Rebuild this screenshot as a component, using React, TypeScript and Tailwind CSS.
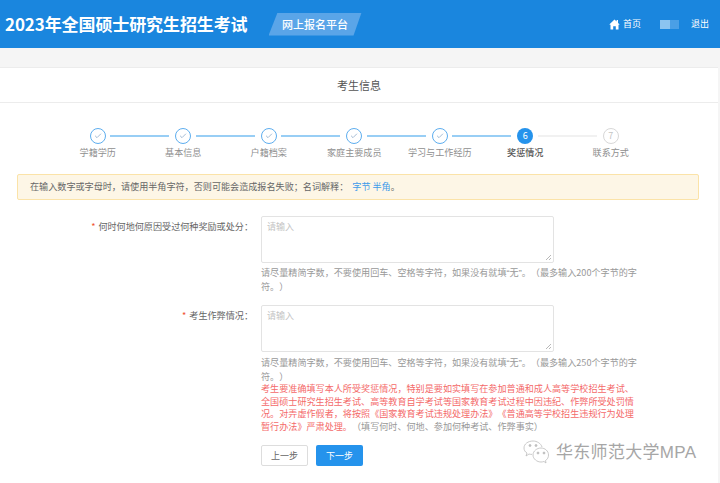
import { Check } from "lucide-react";

const cjk = { fontFamily: '"Noto Sans CJK SC", "Liberation Sans", sans-serif' };

const steps = ["学籍学历", "基本信息", "户籍档案", "家庭主要成员", "学习与工作经历", "奖惩情况", "联系方式"];
const current = 5;

function Step(props: { name: string; index: number }) {
  const { name, index } = props;
  const done = index < current;
  const active = index === current;

  return (
    <div className="relative flex w-[85.5px] flex-col items-center">
      {index < steps.length - 1 && (
        <div
          className={`absolute left-[55px] top-[7px] h-[1.5px] w-[59px] ${done ? "bg-[#98cef5]" : "bg-[#f1f1f1]"}`}
        />
      )}
      {done && (
        <div className="flex h-4 w-4 items-center justify-center rounded-full border border-[#5eaeef] bg-white">
          <Check size={8} className="text-[#7a9cc0]" strokeWidth={2} />
        </div>
      )}
      {active && (
        <div className="flex h-4 w-4 items-center justify-center rounded-full bg-[#2593ec] text-[9px] text-white">
          {index + 1}
        </div>
      )}
      {!done && !active && (
        <div className="flex h-4 w-4 items-center justify-center rounded-full border border-[#d8d8d8] bg-white text-[9px] text-[#c4c4c4]">
          {index + 1}
        </div>
      )}
      <span
        className={`mt-[2px] text-[9.1px] leading-[13px] whitespace-nowrap ${active ? "font-medium text-[#555555]" : "text-[#8f8f8f]"}`}
      >
        {name}
      </span>
    </div>
  );
}

function Field(props: { label: string; pad: string; children: React.ReactNode }) {
  return (
    <div className={`flex ${props.pad}`}>
      <label className="w-[253px] shrink-0 pt-[4px] text-right text-[9.1px] leading-[13px] whitespace-nowrap text-[#666666]">
        <span className="mr-[3px] text-[#f0502e]">*</span>
        {props.label}
      </label>
      <div className="ml-2 w-[380px]">
        <div className="relative h-[47px] w-[293px] rounded-[2px] border border-[#e3e3e3] bg-white px-[5px] py-[3px] text-[9px] leading-[13px] text-[#c4c4c4]">
          请输入
          <svg className="absolute bottom-[1px] right-[1px]" width="7" height="7" viewBox="0 0 7 7">
            <path d="M1 6 6 1M4 6 6 4" stroke="#999999" strokeWidth="0.7" />
          </svg>
        </div>
        {props.children}
      </div>
    </div>
  );
}

function Hint(props: { max: number; top: string }) {
  return (
    <p className={`${props.top} text-[9.1px] leading-[12.5px] text-[#999999]`}>
      请尽量精简字数，不要使用回车、空格等字符，如果没有就填
      <span className="font-['Liberation_Sans']">“</span>无<span className="font-['Liberation_Sans']">”</span>
      。（最多输入{props.max}个字节的字符。）
    </p>
  );
}

export default function App() {
  return (
    <div className="min-h-[483px] overflow-hidden bg-[#f5f5f5] [text-spacing-trim:space-all]" style={cjk}>
      <header className="flex h-12 items-center bg-[#1a86de] pl-[5px] pr-[11px]">
        <h1 className="text-[17px] font-bold tracking-[-0.1px] whitespace-nowrap text-white">
          2023年全国硕士研究生招生考试
        </h1>
        <div className="ml-[21px] flex h-[23px] w-[93px] items-center justify-center bg-[#5aa5e8] text-[11px] font-medium text-white [clip-path:polygon(9px_0,100%_0,calc(100%-8px)_100%,0_100%)]">
          网上报名平台
        </div>
        <div className="ml-auto flex items-center text-[9px] text-white">
          <svg width="11" height="11" viewBox="0 0 11 11" fill="white">
            <path d="M5.500 0.500 0.300 5.500 1.500 5.800V10.500H4.200V7.200H6.800V10.500H9.500V5.800L10.700 5.500 9 3.900V1H7.600V2.600Z" />
          </svg>
          <span className="ml-[3px]">首页</span>
          <div className="ml-[19px] flex h-[9px]">
            <div className="w-[10px] bg-[#8cc4f0]" />
            <div className="w-[9px] bg-[#4a9fe6]" />
          </div>
          <span className="ml-3">退出</span>
        </div>
      </header>

      <main className="mt-[19px] mr-[2px] border-t border-[#ececec] bg-white pb-[17px]">
        <div className="flex h-[35px] items-center justify-center border-b border-[#ececec] text-[11px] text-[#555555]">
          考生信息
        </div>

        <div className="flex pt-[25px] pl-[55px]">
          {steps.map((name, index) => (
            <Step key={name} name={name} index={index} />
          ))}
        </div>

        <div className="mt-[15px] mr-[19px] ml-[17px] flex h-[26px] items-center rounded-[2px] border border-[#fbe3a8] bg-[#fdf6e6] pl-3 text-[9.1px] text-[#666666]">
          在输入数字或字母时，请使用半角字符，否则可能会造成报名失败；名词解释：
          <span className="ml-[4px] text-[#3d9bea]">字节 半角</span>
          <span>。</span>
        </div>

        <Field label="何时何地何原因受过何种奖励或处分：" pad="pt-[16px]">
          <Hint max={200} top="mt-[3px]" />
        </Field>

        <Field label="考生作弊情况：" pad="pt-[13px]">
          <Hint max={250} top="mt-[4px]" />
          <p className="text-[9.1px] leading-[12.6px] text-[#f46a6a]">
            考生要准确填写本人所受奖惩情况，特别是要如实填写在参加普通和成人高等学校招生考试、全国硕士研究生招生考试、高等教育自学考试等国家教育考试过程中因违纪、作弊所受处罚情况。对弄虚作假者，将按照《国家教育考试违规处理办法》《普通高等学校招生违规行为处理暂行办法》严肃处理。
            <span className="text-[#999999]">（填写何时、何地、参加何种考试、作弊事实）</span>
          </p>
          <div className="mt-[13px] flex gap-2">
            <button className="h-[21px] w-[47px] rounded-[2px] border border-[#dddddd] bg-white text-[9px] text-[#666666]">
              上一步
            </button>
            <button className="h-[21px] w-[47px] rounded-[2px] bg-[#2593ec] text-[9px] text-white">
              下一步
            </button>
          </div>
        </Field>
      </main>

      <div
        className="absolute left-[522px] top-[439px] flex items-center text-[#a6a6a6]"
        style={{ fontFamily: '"Liberation Sans", "Noto Sans CJK SC", sans-serif' }}
      >
        <svg width="28" height="26" viewBox="0 0 28 26" fill="none" stroke="#bdbdbd" strokeWidth="0.8">
          <path d="M11 2C6 2 2 5 2 9c0 2 1 4 3 5l-1 3 3-2c1 .3 2 .4 3 .4" />
          <path d="M11 2c4 0 8 2.500 9 6" />
          <path d="M19 9c-4 0-8 3-8 7s4 7 8 7c1 0 2-.2 3-.5l2 1.500-.5-2.500c2-1.200 3-3.200 3-5.500 0-4-3.500-7-7.500-7Z" />
          <circle cx="8" cy="6.500" r="1" fill="#bdbdbd" />
          <circle cx="14" cy="6.500" r="1" fill="#bdbdbd" />
          <circle cx="16" cy="14" r="1" fill="#bdbdbd" />
          <circle cx="22" cy="14" r="1" fill="#bdbdbd" />
        </svg>
        <span className="ml-[6px] text-[17px] leading-none tracking-[0.3px] whitespace-nowrap">华东师范大学MPA</span>
      </div>
    </div>
  );
}
